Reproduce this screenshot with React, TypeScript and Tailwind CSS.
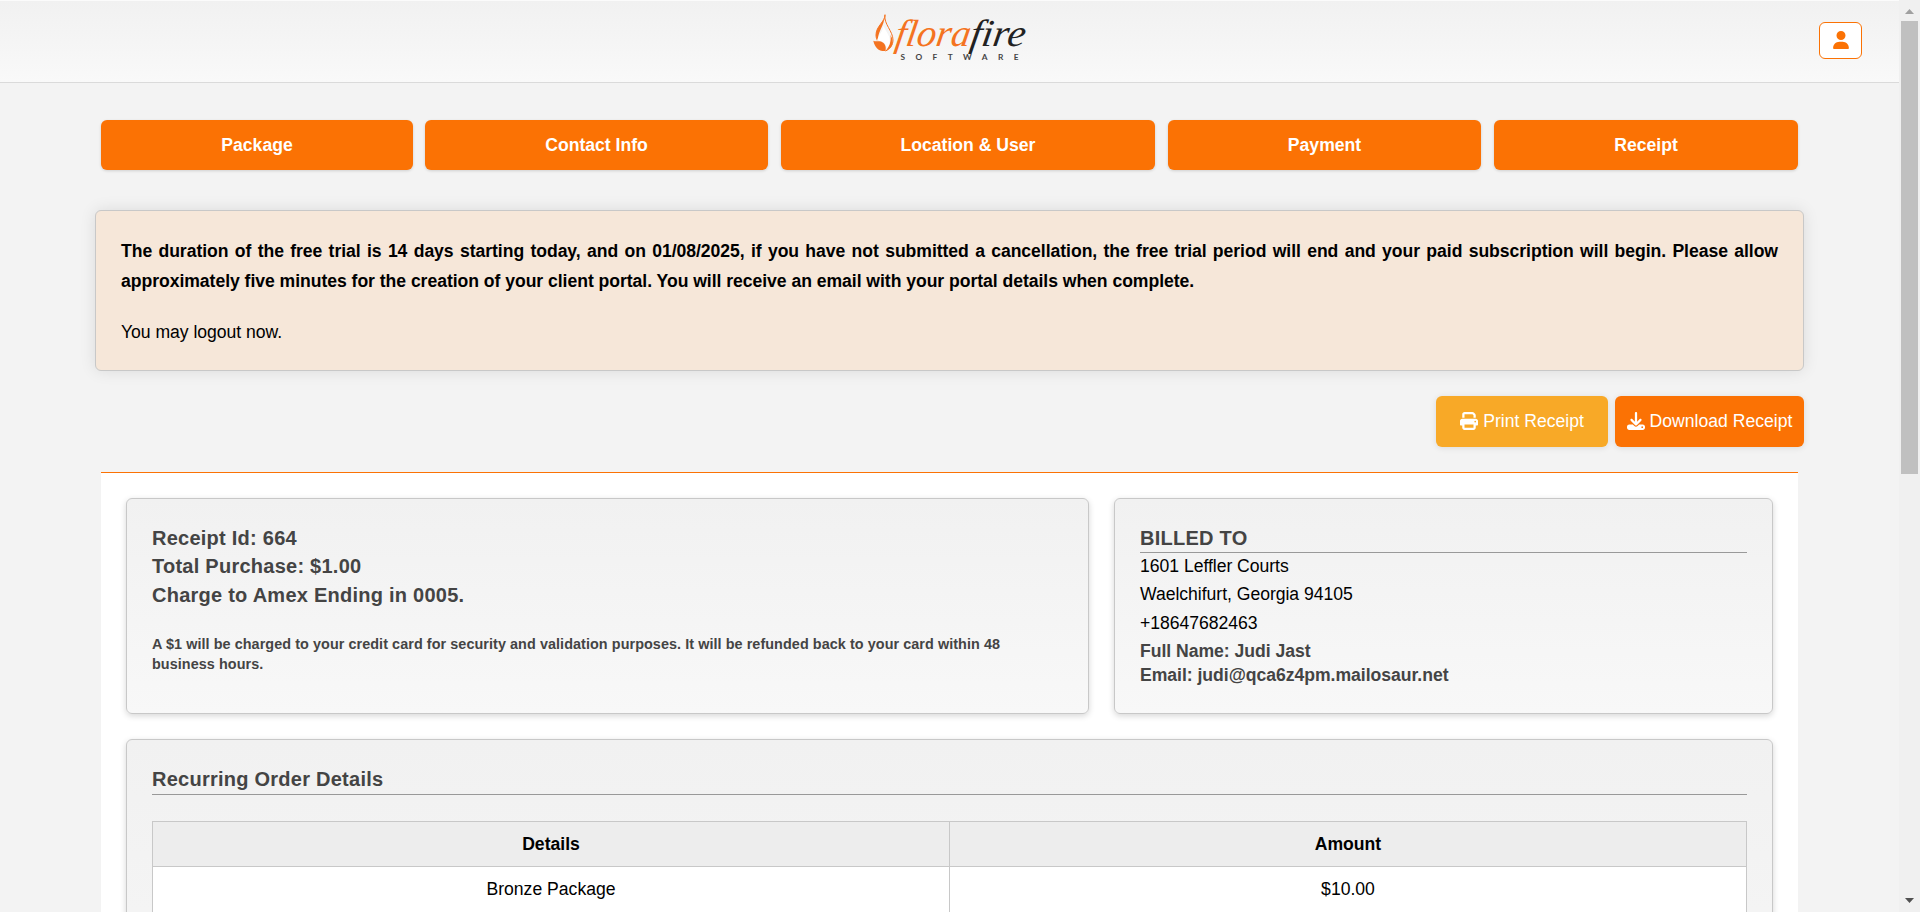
const steps = [
  { label: "Package", width: "w-[312px] -mr-px" },
  { label: "Contact Info", width: "w-[343px]" },
  { label: "Location & User", width: "w-[374px]" },
  { label: "Payment", width: "w-[313px]" },
  { label: "Receipt", width: "w-[304px]" },
];

const icons = {
  user: "M224 256A128 128 0 1 0 224 0a128 128 0 1 0 0 256zm-45.7 48C79.8 304 0 383.8 0 482.3C0 498.7 13.3 512 29.7 512H418.3c16.4 0 29.7-13.3 29.7-29.7C448 383.8 368.2 304 269.7 304H178.3z",
  print:
    "M128 0C92.7 0 64 28.7 64 64v96h64V64H354.7L384 93.3V160h64V93.3c0-17-6.7-33.3-18.7-45.3L400 18.7C388 6.7 371.7 0 354.7 0H128zM384 352v32 64H128V384 368 352H384zm64 32h32c17.7 0 32-14.3 32-32V256c0-35.3-28.7-64-64-64H64c-35.3 0-64 28.7-64 64v96c0 17.7 14.3 32 32 32H64v64c0 35.3 28.7 64 64 64H384c35.3 0 64-28.7 64-64V384zM432 248a24 24 0 1 1 0 48 24 24 0 1 1 0-48z",
  download:
    "M288 32c0-17.7-14.3-32-32-32s-32 14.3-32 32V274.7l-73.4-73.4c-12.5-12.5-32.8-12.5-45.3 0s-12.5 32.8 0 45.3l128 128c12.5 12.5 32.8 12.5 45.3 0l128-128c12.5-12.5 12.5-32.8 0-45.3s-32.8-12.5-45.3 0L288 274.7V32zM64 352c-35.3 0-64 28.7-64 64v32c0 35.3 28.7 64 64 64H448c35.3 0 64-28.7 64-64V416c0-35.3-28.7-64-64-64H346.5l-45.3 45.3c-25 25-65.5 25-90.5 0L165.500 352H64zm368 56a24 24 0 1 1 0 48 24 24 0 1 1 0-48z",
};

function Icon({ d, box = 512, className = "" }: { d: string; box?: number; className?: string }) {
  return (
    <svg viewBox={`0 0 ${box} 512`} className={`h-[18px] shrink-0 ${className}`} fill="currentColor">
      <path d={d} />
    </svg>
  );
}

const card =
  "rounded-md border border-[#c8c8c8] bg-linear-to-b from-[#f1f1f1] to-[#f8f8f8] px-[25px] shadow-[0_2px_6px_rgba(0,0,0,0.16)]";
const title = "text-[20px] font-bold leading-[28.4px] tracking-[0.25px] text-[#444]";

function Logo() {
  return (
    <svg width="156" height="52" viewBox="0 0 156 52" className="block overflow-visible">
      <g transform="translate(1 0)">
        <path d="M12 .7C12 8 3 12 3 21c0 2.500.6 4 1.600 6M12 .7C10.500 10 20 17 20 26c0 5-3 9-7.500 11" fill="none" stroke="#f47321" strokeWidth="1" />
        <path d="M12 .7C12 8 3 12 3 21c0 3 1 5 2.500 6.500C3.500 18 11 14 12 .7Z" fill="#f47321" />
        <path d="M12.500 37C16 33 18.500 28 17.500 21 21.500 28 20 34 12.500 37Z" fill="#f47321" />
        <path d="M4 27C5 21 10 18 10.500 12 13 18 18 22 16.500 29c-.5 2.500-1.500 4-2.500 5C12.500 29 9 26 4 27Z" fill="#fff" />
        <path d="M.3 26.700C3 28 5 26.500 8 27.500c4 1.500 5.500 5 4.500 9.500C6 37.500 2 34 .3 26.700Z" fill="#f47321" />
      </g>
      <g fontFamily="Liberation Serif, serif" fontStyle="italic" fontSize="38" transform="translate(2 32) skewX(-9)">
        <text x="20" y="0" fill="#f47321" textLength="75" lengthAdjust="spacingAndGlyphs">flora</text>
        <text x="95" y="0" fill="#222" textLength="55" lengthAdjust="spacingAndGlyphs">fire</text>
      </g>
      <text x="28.500" y="46.300" fontFamily="Lato, sans-serif" fontWeight="700" fontSize="8.300" fill="#444" textLength="118">SOFTWARE</text>
    </svg>
  );
}

function Scrollbar() {
  return (
    <div className="flex w-[21px] shrink-0 flex-col items-center bg-[#f0f0f0] px-[2px]">
      <div className="flex h-[21px] items-center">
        <svg width="9" height="5" className="mt-[2px]"><path d="M0 5L4.500 0L9 5Z" fill="#a0a0a0" /></svg>
      </div>
      <div className="h-[453px] w-[17px] bg-[#c0c0c0]" />
      <svg width="9" height="5" className="mt-auto mb-[9px]"><path d="M0 0L4.500 5L9 0Z" fill="#505050" /></svg>
    </div>
  );
}

export default function App() {
  return (
    <div className="flex h-[912px] w-[1920px] overflow-hidden bg-[#f3f3f3] font-['Liberation_Sans',Arial,sans-serif] text-[17.6px] text-black">
      <div className="w-[1899px] shrink-0">
        <header className="grid h-[83px] grid-cols-[1fr_156px_1fr] border-t border-b border-t-[#fbfbfb] border-b-[#dadada] bg-linear-to-b from-[#f1f1f1] to-[#f9f9f9]">
          <div />
          <div className="pt-[13px]"><Logo /></div>
          <button className="mt-[21px] mr-[37px] flex h-[37px] w-[43px] items-center justify-center justify-self-end rounded-md border border-[#fb7204] bg-white pb-px text-[#fb7204]">
            <Icon d={icons.user} box={448} className="w-[16px]" />
          </button>
        </header>

        <nav className="flex gap-[13px] pt-[37px] pl-[101px]">
          {steps.map((s) => (
            <div key={s.label} className={`${s.width} flex h-[50px] shrink-0 items-center justify-center rounded-md bg-[#fb7204] font-bold text-white shadow-[0_1px_3px_rgba(0,0,0,0.15)]`}>
              {s.label}
            </div>
          ))}
        </nav>

        <section className="mt-[40px] mr-[95px] ml-[95px] h-[161px] rounded-md border border-[#c8c8c8] bg-[#f6e7d9] px-[25px] pt-[25px] leading-[30px] shadow-[0_0_16px_rgba(0,0,0,0.1)]">
          <p className="text-justify font-bold tracking-[-0.042px]">
            The duration of the free trial is 14 days starting today, and on 01/08/2025, if you have not submitted a cancellation, the free trial period will end and your paid subscription will begin. Please allow approximately five minutes for the creation of your client portal. You will receive an email with your portal details when complete.
          </p>
          <p className="mt-[21px] tracking-[-0.03px]">You may logout now.</p>
        </section>

        <div className="mt-[25px] mr-[95px] flex justify-end gap-[7px] text-white">
          <button className="flex h-[51px] w-[172px] items-center justify-center gap-[5px] rounded-md bg-[#f8a927] shadow-[0_1px_6px_rgba(0,0,0,0.1)]">
            <Icon d={icons.print} className="-mt-[2px] w-[18px]" />Print Receipt
          </button>
          <button className="flex h-[51px] w-[189px] items-center justify-center gap-[5px] rounded-md bg-[#fb7204] shadow-[0_1px_6px_rgba(0,0,0,0.1)]">
            <Icon d={icons.download} className="-mt-[2px] w-[18px]" />Download Receipt
          </button>
        </div>

        <main className="mt-[25px] mr-[101px] ml-[101px] h-[600px] border-t border-[#fb7204] bg-white px-[25px] pt-[25px]">
          <div className="flex justify-between">
            <section className={`${card} h-[216px] w-[963px] pt-[25px]`}>
              <p className={title}>Receipt Id: 664</p>
              <p className={title}>Total Purchase: $1.00</p>
              <p className={title}>Charge to Amex Ending in 0005.</p>
              <p className="mt-[25px] text-[14.4px] leading-[20px] font-bold tracking-[0.065px] text-[#444]">
                A $1 will be charged to your credit card for security and validation purposes. It will be refunded back to your card within 48 business hours.
              </p>
            </section>
            <section className={`${card} h-[216px] w-[659px] pt-[25px] tracking-[-0.03px]`}>
              <h2 className={`${title} h-[29px] border-b border-[#999]`}>BILLED TO</h2>
              <p className="-mt-px leading-[28.4px]">1601 Leffler Courts</p>
              <p className="leading-[28.4px]">Waelchifurt, Georgia 94105</p>
              <p className="leading-[28.4px]">+18647682463</p>
              <p className="mt-[2px] leading-[24px] font-bold text-[#444]">Full Name: Judi Jast</p>
              <p className="leading-[24px] font-bold text-[#444]">Email: judi@qca6z4pm.mailosaur.net</p>
            </section>
          </div>
          <section className={`${card} mt-[25px] h-[400px] pt-[25px]`}>
            <h2 className={`${title} h-[30px] border-b border-[#999]`}>Recurring Order Details</h2>
            <table className="mt-[26px] w-full table-fixed border-collapse text-center">
              <thead>
                <tr className="h-[45px] bg-[#ededed]">
                  <th className="border border-[#c8c8c8]">Details</th>
                  <th className="border border-[#c8c8c8]">Amount</th>
                </tr>
              </thead>
              <tbody>
                <tr className="h-[46px] bg-white">
                  <td className="border border-[#c8c8c8]">Bronze Package</td>
                  <td className="border border-[#c8c8c8]">$10.00</td>
                </tr>
              </tbody>
            </table>
          </section>
        </main>
      </div>
      <Scrollbar />
    </div>
  );
}
